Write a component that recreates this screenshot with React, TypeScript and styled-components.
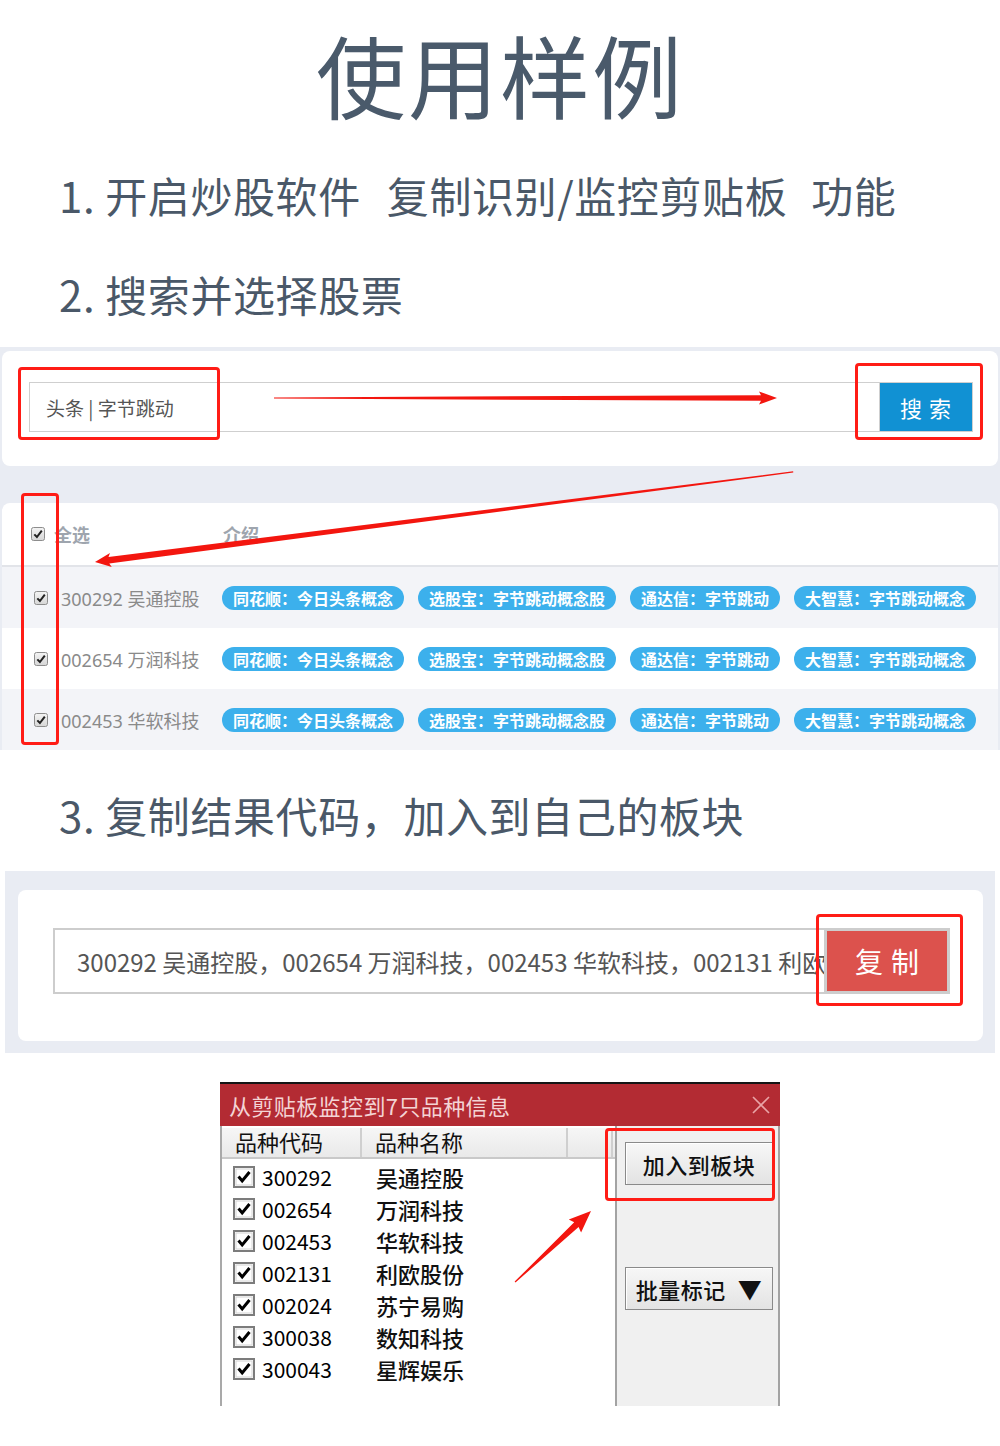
import React from "react";
import styled, { createGlobalStyle } from "styled-components";

const GlobalStyle = createGlobalStyle`
  body {
    margin: 0;
    background: #fff;
    font-family: "Noto Sans CJK SC", "Noto Sans", sans-serif;
  }
`;

const tagList = [
  "同花顺：今日头条概念",
  "选股宝：字节跳动概念股",
  "通达信：字节跳动",
  "大智慧：字节跳动概念",
];

const webRows = ["300292 吴通控股", "002654 万润科技", "002453 华软科技"];

const dialogRows = [
  ["300292", "吴通控股"],
  ["002654", "万润科技"],
  ["002453", "华软科技"],
  ["002131", "利欧股份"],
  ["002024", "苏宁易购"],
  ["300038", "数知科技"],
  ["300043", "星辉娱乐"],
];

const WebCheck = () => (
  <svg width="14" height="14" viewBox="0 0 14 14">
    <defs>
      <linearGradient id="cbg" x1="0" y1="0" x2="0" y2="1">
        <stop offset="0" stopColor="#f4f4f4" />
        <stop offset="1" stopColor="#d6d6d6" />
      </linearGradient>
    </defs>
    <rect x="0.5" y="0.5" width="13" height="13" rx="2" fill="url(#cbg)" stroke="#8d8d8d" />
    <path d="M3.3 7.4 L5.9 10 L10.8 3.6" fill="none" stroke="#222" strokeWidth="2" />
  </svg>
);

const BoxCheck = () => (
  <svg width="22" height="22" viewBox="0 0 22 22">
    <rect x="1" y="1" width="20" height="20" fill="#fff" stroke="#7c7c7c" strokeWidth="2" />
    <rect x="3" y="3" width="16" height="16" fill="none" stroke="#d4d4d4" strokeWidth="1" />
    <path d="M5.5 10.5 L9.2 15 L16.5 6" fill="none" stroke="#000" strokeWidth="3" />
  </svg>
);

// tapered red annotation arrow, tip at origin pointing left in local coords
const Arrow = ({ len, head, half, thick }: { len: number; head: number; half: number; thick: number }) => (
  <polygon
    points={`0,0 ${head},${-half} ${head - 2},${-thick} ${len},-0.6 ${len},0.6 ${head - 2},${thick} ${head},${half}`}
    fill="#f3160f"
  />
);

const App = () => {
  return (
    <Page>
      <GlobalStyle />
      <Title>使用样例</Title>
      <Step $top={56}>
        1. 开启炒股软件<Gap $w={26} />复制识别/监控剪贴板<Gap $w={24} />功能
      </Step>
      <Step $top={57}>2. 搜索并选择股票</Step>

      <SearchSection>
        <SearchCard>
          <SearchBar>
            <SearchInput>头条 | 字节跳动</SearchInput>
            <SearchButton>搜 索</SearchButton>
          </SearchBar>
        </SearchCard>
        <ResultCard>
          <HeaderRow>
            <CheckCell $pad={29} $gap={9}>
              <WebCheck />
            </CheckCell>
            <HeadText $w={169}>全选</HeadText>
            <HeadText>介绍</HeadText>
          </HeaderRow>
          {webRows.map((r, i) => (
            <Row key={r} $alt={i % 2 === 0}>
              <CheckCell $pad={32} $gap={13}>
                <WebCheck />
              </CheckCell>
              <StockName>{r}</StockName>
              <Tags>
                {tagList.map((t) => (
                  <Tag key={t}>{t}</Tag>
                ))}
              </Tags>
            </Row>
          ))}
        </ResultCard>
        <RedBox style={{ left: 18, top: 20, width: 202, height: 73 }} />
        <RedBox style={{ left: 855, top: 16, width: 128, height: 77 }} />
        <RedBox style={{ left: 21, top: 146, width: 38, height: 252 }} />
        <Overlay width="1000" height="401" viewBox="0 0 1000 401">
          <g transform="translate(777,51) rotate(180)">
            <Arrow len={503} head={18} half={6.5} thick={2.8} />
          </g>
          <g transform="translate(95,215) rotate(-7.35)">
            <Arrow len={704} head={16} half={7} thick={3.2} />
          </g>
        </Overlay>
      </SearchSection>

      <Step $top={44}>3. 复制结果代码，加入到自己的板块</Step>

      <CopySection>
        <CopyCard>
          <CopyBar>
            <CopyInput>
              <CopyText>300292 吴通控股，002654 万润科技，002453 华软科技，002131 利欧股份，002024 苏宁易购</CopyText>
            </CopyInput>
            <CopyButton>复制</CopyButton>
          </CopyBar>
        </CopyCard>
        <RedBox style={{ left: 811, top: 43, width: 147, height: 92 }} />
      </CopySection>

      <Dialog>
        <TitleBar>
          <span>从剪贴板监控到7只品种信息</span>
          <svg width="18" height="18" viewBox="0 0 18 18">
            <path d="M1 1 L17 17 M17 1 L1 17" stroke="#e9a4a6" strokeWidth="1.6" />
          </svg>
        </TitleBar>
        <DialogBody>
          <ListPane>
            <ListHeader>
              <HeaderCell $w={140}>品种代码</HeaderCell>
              <HeaderCell $w={206}>品种名称</HeaderCell>
              <HeaderCell $w={45} />
            </ListHeader>
            <ListRows>
              {dialogRows.map(([code, name]) => (
                <ListRow key={code}>
                  <BoxCheck />
                  <Code>{code}</Code>
                  <span>{name}</span>
                </ListRow>
              ))}
            </ListRows>
          </ListPane>
          <SidePane>
            <WinButton>加入到板块</WinButton>
            <WinButton $top={82}>
              批量标记<Caret>▼</Caret>
            </WinButton>
          </SidePane>
        </DialogBody>
        <RedBox style={{ left: 385, top: 44, width: 170, height: 73 }} />
        <Overlay width="560" height="324" viewBox="0 0 560 324">
          <g transform="translate(371,127) rotate(136.9)">
            <Arrow len={104} head={22} half={9} thick={3.2} />
          </g>
        </Overlay>
      </Dialog>
    </Page>
  );
};

export default App;

const Page = styled.div`
  width: 1000px;
  height: 1446px;
  overflow: hidden;
  background: #fff;
`;

const Title = styled.h1`
  margin: 0;
  padding-top: 28px;
  font-size: 90px;
  line-height: 1;
  font-weight: 400;
  letter-spacing: 2px;
  text-align: center;
  color: #4a5a6b;
`;

const Step = styled.h2<{ $top: number }>`
  margin: ${(p) => p.$top}px 0 0;
  padding-left: 59px;
  font-size: 42px;
  line-height: 1;
  font-weight: 400;
  letter-spacing: 0.6px;
  color: #4a5868;
  white-space: pre;
`;

const Gap = styled.span<{ $w: number }>`
  display: inline-block;
  width: ${(p) => p.$w}px;
`;

const SearchSection = styled.div`
  position: relative;
  margin-top: 32px;
  padding: 4px 2px 0;
  background: #e9ecf3;
`;

const SearchCard = styled.div`
  box-sizing: border-box;
  height: 115px;
  padding: 31px 25px 0 27px;
  background: #fff;
  border-radius: 8px;
`;

const SearchBar = styled.div`
  display: flex;
  height: 50px;
`;

const SearchInput = styled.div`
  flex: 1;
  display: flex;
  align-items: center;
  padding-left: 16px;
  border: 1px solid #cfcfcf;
  border-right: none;
  font-size: 19px;
  color: #555;
`;

const SearchButton = styled.div`
  width: 92px;
  display: flex;
  align-items: center;
  justify-content: center;
  background: #1191d3;
  border: 1px solid #cfcfcf;
  color: #fff;
  font-size: 22px;
  letter-spacing: 1px;
`;

const ResultCard = styled.div`
  margin-top: 37px;
  background: #fff;
  border-radius: 8px 8px 0 0;
  overflow: hidden;
`;

const HeaderRow = styled.div`
  display: flex;
  align-items: center;
  height: 62px;
  border-bottom: 2px solid #e2e4e9;
`;

const Row = styled.div<{ $alt: boolean }>`
  display: flex;
  align-items: center;
  height: 61px;
  background: ${(p) => (p.$alt ? "#f3f4f8" : "#fff")};
`;

const CheckCell = styled.div<{ $pad: number; $gap: number }>`
  display: flex;
  padding-left: ${(p) => p.$pad}px;
  margin-right: ${(p) => p.$gap}px;
`;

const HeadText = styled.div<{ $w?: number }>`
  width: ${(p) => (p.$w ? `${p.$w}px` : "auto")};
  font-size: 18px;
  font-weight: 700;
  color: #9ea5ae;
`;

const StockName = styled.div`
  width: 161px;
  font-family: "Noto Sans", "Noto Sans CJK SC", sans-serif;
  font-size: 18px;
  color: #8a8a8a;
  white-space: nowrap;
`;

const Tags = styled.div`
  display: flex;
  gap: 14px;
`;

const Tag = styled.span`
  height: 24px;
  line-height: 24px;
  padding: 0 11px;
  border-radius: 12px;
  background: #3cb0ec;
  color: #fff;
  font-size: 16px;
  font-weight: 700;
  white-space: nowrap;
`;

const RedBox = styled.div`
  position: absolute;
  box-sizing: border-box;
  border: 3px solid #ff1c16;
  border-radius: 4px;
  pointer-events: none;
`;

const Overlay = styled.svg`
  position: absolute;
  left: 0;
  top: 0;
  pointer-events: none;
`;

const CopySection = styled.div`
  position: relative;
  margin: 35px 5px 0;
  padding: 19px 12px 12px 13px;
  background: #e9ecf3;
`;

const CopyCard = styled.div`
  box-sizing: border-box;
  height: 151px;
  padding: 38px 33px 0 35px;
  background: #fff;
  border-radius: 8px;
`;

const CopyBar = styled.div`
  display: flex;
  height: 66px;
`;

const CopyInput = styled.div`
  flex: 1;
  min-width: 0;
  display: flex;
  align-items: center;
  padding-left: 22px;
  border: 2px solid #cdcdcd;
  border-right: none;
  overflow: hidden;
`;

const CopyText = styled.span`
  font-size: 24px;
  color: #555;
  white-space: nowrap;
`;

const CopyButton = styled.div`
  box-sizing: border-box;
  flex: 0 0 126px;
  display: flex;
  align-items: center;
  justify-content: center;
  background: #dc524d;
  border: 3px solid #cdcdcd;
  color: #fff;
  font-size: 28px;
  letter-spacing: 8px;
  text-indent: 8px;
`;

const Dialog = styled.div`
  position: relative;
  width: 560px;
  margin: 29px 0 0 220px;
  border-top: 2px solid #151515;
`;

const TitleBar = styled.div`
  display: flex;
  align-items: center;
  justify-content: space-between;
  height: 42px;
  padding: 0 10px 0 9px;
  background: #b32b33;
  color: #f4d4d5;
  font-size: 22px;
  letter-spacing: 0.4px;
`;

const DialogBody = styled.div`
  display: flex;
  height: 280px;
`;

const ListPane = styled.div`
  width: 393px;
  border-left: 2px solid #a9a9a9;
  background: #fff;
`;

const ListHeader = styled.div`
  display: flex;
  height: 29px;
  margin-top: 2px;
  background: linear-gradient(#f6f6f6, #e9e9e9);
  border-bottom: 2px solid #c9c9c9;
`;

const HeaderCell = styled.div<{ $w: number }>`
  box-sizing: border-box;
  width: ${(p) => p.$w}px;
  padding-left: 13px;
  border-right: 2px solid #cfcfcf;
  font-size: 22px;
  line-height: 27px;
  color: #111;
`;

const ListRows = styled.div`
  padding-top: 2px;
`;

const ListRow = styled.div`
  display: flex;
  align-items: center;
  height: 32px;
  padding-left: 11px;
  font-size: 22px;
  font-weight: 500;
  color: #111;
`;

const Code = styled.span`
  width: 114px;
  margin-left: 7px;
  font-size: 21px;
  font-weight: 400;
  color: #000;
`;

const SidePane = styled.div`
  flex: 1;
  display: flex;
  flex-direction: column;
  padding: 16px 0 0 8px;
  background: #f0f0f0;
  border-left: 2px solid #a3a3a3;
  border-right: 2px solid #a3a3a3;
`;

const WinButton = styled.div<{ $top?: number }>`
  box-sizing: border-box;
  width: 148px;
  height: 43px;
  margin-top: ${(p) => p.$top ?? 0}px;
  display: flex;
  align-items: center;
  justify-content: center;
  border: 1px solid #8a8a8a;
  background: linear-gradient(#f7f7f7, #e3e3e3);
  box-shadow: inset 1px 1px 0 #fff;
  font-size: 22px;
  font-weight: 500;
  letter-spacing: 0.5px;
  color: #111;
`;

const Caret = styled.span`
  margin-left: 12px;
  font-size: 24px;
`;
